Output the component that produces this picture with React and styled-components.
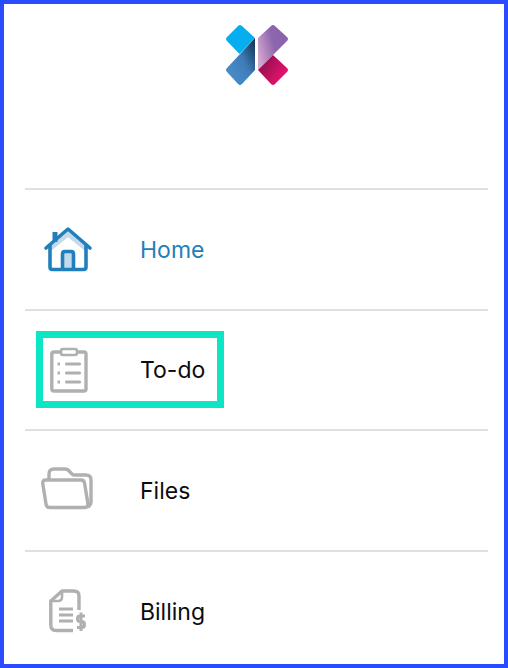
import React from "react";
import styled, { createGlobalStyle } from "styled-components";

const Global = createGlobalStyle`
  html, body { margin: 0; padding: 0; background: #fff; }
  * { box-sizing: border-box; }
`;

const Frame = styled.div`
  width: 508px;
  height: 668px;
  border: 4px solid #2b4bff;
  overflow: hidden;
  background: #fff;
  font-family: Inter, "Liberation Sans", sans-serif;
`;

const Header = styled.header`
  height: 184px;
  display: flex;
  justify-content: center;
  padding: 20px 0 0 5px;
`;

const Nav = styled.nav`
  margin: 0 16px 0 21px;
  display: flex;
  flex-direction: column;
`;

const Row = styled.div`
  height: 120.6px;
  flex: none;
  border-top: 2px solid #e0e0e0;
  display: flex;
  align-items: center;
  padding-left: 11px;
`;

const NavLink = styled.a`
  width: 188px;
  height: 77px;
  display: flex;
  align-items: center;
  border: 7px solid ${p => (p.$focused ? "#0ce6c4" : "transparent")};
  font-size: 23px;
  line-height: 1;
  color: ${p => (p.$active ? "#2180bb" : "#0c0c10")};
  text-decoration: none;
`;

const IconSlot = styled.span`
  width: 97px;
  flex: none;
  display: flex;
  align-items: center;
  svg { display: block; flex: none; }
`;

const Label = styled.span`
  padding-top: 2px;
`;

const FolderSvg = styled.svg`
  margin: -5px 0 0 -2px;
`;

const Logo = () => (
  <svg width="64" height="62" viewBox="0 0 64 62">
    <defs>
      <linearGradient id="lb" x1="0" y1="1" x2="1" y2="0.15">
        <stop offset="0" stopColor="#4a93d2" />
        <stop offset="0.6" stopColor="#3f7cb9" />
        <stop offset="1" stopColor="#173a5e" />
      </linearGradient>
      <linearGradient id="rp" x1="0" y1="0.7" x2="1" y2="0.3">
        <stop offset="0" stopColor="#d5a8cf" />
        <stop offset="0.55" stopColor="#8c66ae" />
        <stop offset="1" stopColor="#8a62ad" />
      </linearGradient>
      <linearGradient id="rm" x1="0" y1="0" x2="1" y2="0.7">
        <stop offset="0" stopColor="#7d0c48" />
        <stop offset="1" stopColor="#f0146f" />
      </linearGradient>
    </defs>
    <path d="M13 2 Q15 0 17 2 L30 14 L14.5 30 L2 17 Q0 15 2 13 Z" fill="#06aeef" />
    <path d="M30 14 V46 L17 60 Q15 62 13 60 L2 48 Q0 46 2 44 Z" fill="url(#lb)" />
    <path d="M33 14 L46 2 Q48 0 50 2 L62 13 Q64 15 62 17 L33 46 Z" fill="url(#rp)" />
    <path d="M33 46 L48 31 L62 44 Q64 46 62 48 L50 60 Q48 62 46 60 Z" fill="url(#rm)" />
  </svg>
);

const HomeIcon = () => (
  <svg width="50" height="46" viewBox="-1 0 50 46" fill="none">
    <path d="M7 20 L24 5 L41 20 V25 L24 11 L7 25 Z" fill="#c3d9ec" />
    <rect x="19" y="26" width="10" height="17" fill="#c3d9ec" />
    <path d="M2 22 L24 3 L46 22" stroke="#2180bb" strokeWidth="3.6" strokeLinecap="round" strokeLinejoin="round" />
    <path d="M6 19 V41 Q6 43.5 8.5 43.5 H39.5 Q42 43.5 42 41 V19" stroke="#2180bb" strokeWidth="3.6" />
    <path d="M18.5 43 V28 Q18.5 25.5 21 25.5 H27 Q29.5 25.5 29.5 28 V43" stroke="#2180bb" strokeWidth="3.6" />
    <rect x="8.5" y="6" width="5" height="10" fill="#2180bb" />
  </svg>
);

const TodoIcon = () => (
  <svg width="46" height="46" viewBox="-7 0 46 46" fill="none" stroke="#b0b0b0">
    <path d="M11 5 H4 Q1.8 5 1.8 7 V42 Q1.8 44 4 44 H34 Q36 44 36 42 V7 Q36 5 34 5 H27" strokeWidth="3.4" />
    <rect x="11" y="2" width="16" height="6" rx="2" strokeWidth="2.6" />
    <path d="M7.5 17 H10 M7.5 26 H10 M7.5 35 H10" strokeWidth="3" />
    <path d="M16.5 17 H29.5 M16.5 26 H29.5 M16.5 35 H29.5" strokeWidth="3.2" strokeLinecap="round" />
  </svg>
);

const FilesIcon = () => (
  <FolderSvg width="53" height="44" viewBox="0 0 53 44" fill="none" stroke="#b0b0b0" strokeWidth="3.4" strokeLinejoin="round">
    <path d="M8 13 V8 Q8 3 13 3 H24 Q27 3 29 6 L31 8 Q32 9 34 9 H45 Q50 9 50 14 V36 Q50 39 47 41" />
    <path d="M1.7 17 Q1.7 14 4.7 14 H40 Q43 14 43.5 17 L47 38 Q47 41.5 44 41.5 H8.5 Q5.5 41.5 5 38 Z" />
  </FolderSvg>
);

const BillingIcon = () => (
  <svg width="44" height="44" viewBox="-6 0 44 44" fill="none" stroke="#b0b0b0" strokeLinejoin="round">
    <path d="M24 41.5 H7 Q1.8 41.5 1.8 36 V12 L13 2 H25 Q30 2 30 7 V21" strokeWidth="3.4" />
    <path d="M2 12 H9 Q13 12 13 8 V2" strokeWidth="2.6" />
    <path d="M10 20 H24 M10 26 H24 M10 32 H24" strokeWidth="3.2" />
    <path d="M36 27 H31 Q28.5 27 28.5 29.5 Q28.5 32.5 31 32.5 H33 Q35.5 32.5 35.5 35.5 Q35.5 38.5 33 38.5 H28 M32 23.5 V42" strokeWidth="3" />
  </svg>
);

const items = [
  { label: "Home", Icon: HomeIcon, active: true },
  { label: "To-do", Icon: TodoIcon, focused: true },
  { label: "Files", Icon: FilesIcon },
  { label: "Billing", Icon: BillingIcon },
];

export default function App() {
  return (
    <>
      <Global />
      <Frame>
        <Header>
          <Logo />
        </Header>
        <Nav>
          {items.map(({ label, Icon, active, focused }) => (
            <Row key={label}>
              <NavLink href="#" $active={active} $focused={focused}>
                <IconSlot>
                  <Icon />
                </IconSlot>
                <Label>{label}</Label>
              </NavLink>
            </Row>
          ))}
        </Nav>
      </Frame>
    </>
  );
}
